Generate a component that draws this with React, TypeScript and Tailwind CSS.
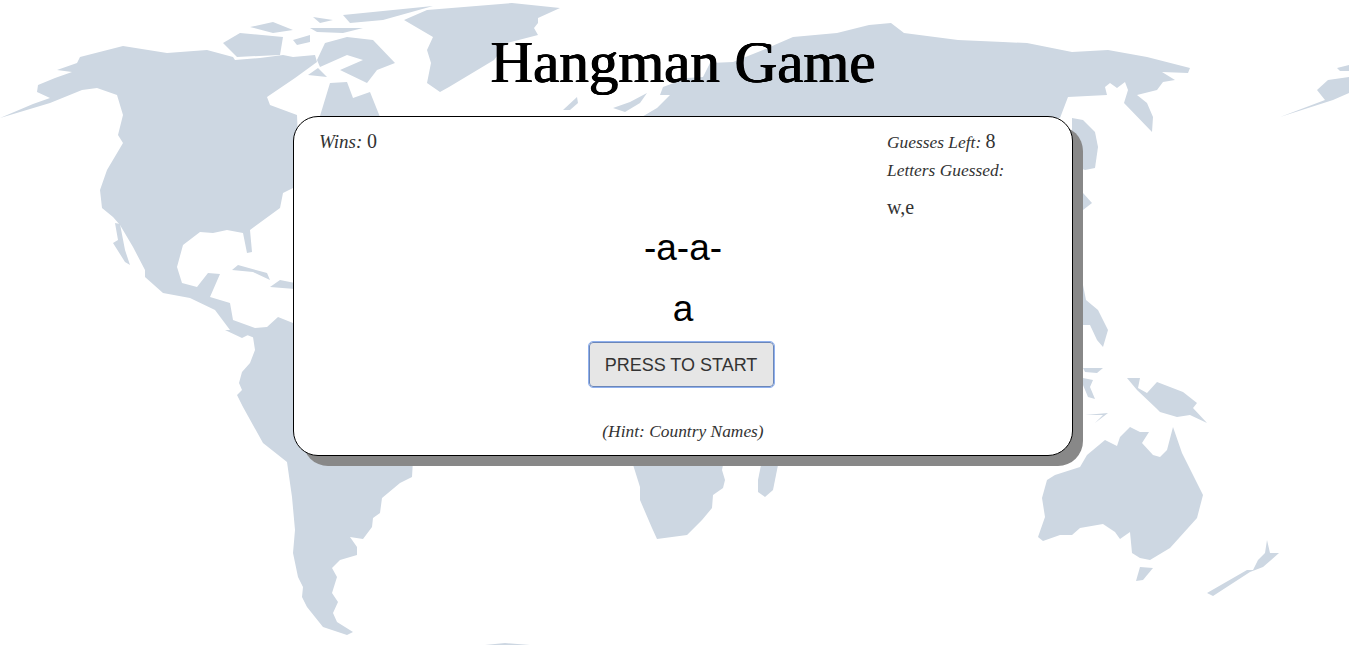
const land = [
  // North America
  "M0,118 L33,104 L50,98 L37,92 L38,85 L55,78 L72,72 L57,70 L77,63 L80,57 L123,46 L167,53 L207,50 L233,57 L235,60 L260,58 L283,55 L293,57 L315,55 L317,62 L295,78 L267,97 L270,105 L297,115 L300,190 L293,188 L283,193 L280,208 L250,230 L252,252 L247,253 L243,233 L227,230 L213,233 L200,232 L183,245 L177,267 L182,283 L197,287 L208,273 L220,274 L210,297 L230,303 L233,320 L255,328 L267,327 L278,317 L293,323 L300,345 L260,340 L242,333 L230,330 L215,310 L190,298 L163,293 L145,277 L145,270 L133,247 L120,225 L113,217 L102,208 L100,190 L107,170 L123,143 L118,135 L123,115 L117,95 L97,88 L82,90 L50,103 L20,112 Z",
  "M115,223 L120,224 L125,250 L130,265 L125,262 L113,243 L118,240 Z",
  // Arctic islands
  "M223,43 L240,33 L283,37 L280,55 L237,57 Z",
  "M250,27 L273,22 L293,30 L273,33 Z",
  "M293,40 L310,35 L310,42 L297,45 Z",
  "M310,28 L363,28 L343,33 L317,32 Z",
  "M313,17 L333,20 L320,23 Z",
  "M325,43 L347,37 L373,40 L395,63 L377,70 L367,83 L340,70 L363,60 L347,55 L320,67 L317,60 Z",
  "M343,15 L433,6 L383,20 L350,23 Z",
  "M320,116 L330,83 L347,82 L353,98 L370,92 L380,117 Z",
  "M308,75 L318,68 L327,77 Z",
  // Caribbean
  "M232,270 L238,265 L267,273 L270,280 L253,272 Z",
  "M270,287 L280,280 L295,283 L295,289 Z",
  // Greenland
  "M404,20 L427,10 L512,3 L560,8 L538,18 L538,23 L534,28 L538,35 L507,43 L494,60 L449,87 L440,92 L427,83 L431,63 L427,50 L433,37 Z",
  // Eurasia
  "M640,118 L657,108 L670,95 L660,95 L663,87 L687,78 L703,77 L710,63 L733,62 L763,50 L793,37 L837,33 L869,25 L891,23 L904,33 L958,40 L1003,42 L1027,43 L1072,52 L1108,50 L1147,57 L1190,68 L1188,73 L1162,72 L1175,80 L1163,82 L1157,90 L1137,95 L1147,103 L1153,117 L1152,132 L1124,103 L1128,90 L1125,82 L1117,88 L1110,83 L1105,87 L1107,95 L1068,97 L1060,118 Z",
  "M563,110 L577,97 L578,103 L570,110 Z",
  "M613,108 L630,102 L647,93 L640,103 L625,112 Z",
  "M1072,118 L1083,120 L1095,132 L1098,147 L1095,168 L1085,170 L1072,165 Z",
  "M1075,193 L1083,193 L1092,203 L1083,210 L1075,210 Z",
  // Alaska wrap
  "M1280,117 L1325,100 L1317,90 L1328,80 L1349,77 L1349,93 L1333,100 Z",
  "M1337,68 L1349,65 L1349,71 L1340,71 Z",
  // South America
  "M225,330 L242,338 L252,333 L253,337 L255,350 L250,363 L242,372 L239,383 L242,390 L237,395 L243,407 L263,443 L287,462 L292,497 L295,530 L293,553 L298,577 L303,587 L302,597 L307,607 L323,627 L347,635 L353,632 L337,622 L333,613 L338,602 L332,593 L337,577 L332,568 L340,560 L357,555 L357,547 L350,537 L363,539 L372,527 L373,518 L380,513 L382,498 L400,483 L412,477 L413,460 L380,400 L300,330 Z",
  // Africa, Madagascar
  "M630,455 L640,487 L640,500 L652,528 L657,539 L687,535 L702,520 L712,508 L713,495 L723,488 L725,480 L722,470 L725,455 Z",
  "M763,455 L758,480 L758,492 L765,497 L773,490 L780,455 Z",
  // Antarctic sliver
  "M485,645 L505,643 L530,645 Z",
  // Australia
  "M1047,480 L1042,498 L1045,517 L1038,537 L1043,541 L1060,535 L1072,535 L1080,528 L1103,524 L1115,532 L1120,539 L1130,532 L1132,553 L1140,558 L1150,560 L1170,548 L1197,518 L1203,495 L1192,473 L1182,453 L1173,427 L1167,450 L1160,457 L1153,455 L1142,443 L1149,432 L1140,432 L1130,427 L1120,437 L1117,446 L1105,440 L1087,455 L1080,467 L1055,475 Z",
  "M1140,567 L1153,568 L1143,580 L1136,581 Z",
  // New Zealand
  "M1207,593 L1247,570 L1253,570 L1258,560 L1265,553 L1267,540 L1270,553 L1279,553 L1263,567 L1250,572 L1213,596 Z",
  // New Guinea
  "M1127,378 L1140,378 L1138,388 L1147,393 L1157,382 L1183,392 L1197,403 L1193,408 L1207,423 L1190,415 L1177,417 L1160,412 L1156,408 L1137,390 Z",
  // Indonesia, Philippines
  "M1083,368 L1103,368 L1097,373 L1085,372 Z",
  "M1083,378 L1093,380 L1090,387 L1095,399 L1088,397 L1083,385 Z",
  "M1085,415 L1108,413 L1095,423 L1103,415 Z",
  "M1083,285 L1086,300 L1098,310 L1108,330 L1103,347 L1097,340 L1090,325 L1083,325 Z",
];

function WorldMap() {
  return (
    <svg
      className="absolute inset-0 h-[645px] w-[1349px]"
      viewBox="0 0 1349 645"
      aria-hidden="true"
    >
      {land.map((d, i) => (
        <path key={i} d={d} fill="#cdd7e2" />
      ))}
    </svg>
  );
}

export default function App() {
  return (
    <div className="relative h-[645px] w-full overflow-hidden bg-white">
      <WorldMap />
      <div className="relative flex flex-col items-center pl-[17px]">
        <h1 className="mt-[26px] h-[90px] text-center font-['Liberation_Serif',serif] text-[59px] leading-[72px] text-black [text-shadow:0.6px_0_0_#000,-0.6px_0_0_#000,0_0.4px_0_#000]">
          Hangman Game
        </h1>
        <div className="h-[340px] w-[780px] rounded-[25px] border border-black bg-white text-center shadow-[10px_10px_0_#888]">
          <div className="flex h-[106px] justify-between pr-[68px] pl-[25px] pt-[11px] text-left text-[#333]">
            <p className="font-['Liberation_Serif',serif] text-[19px] leading-[26px] italic">
              Wins: <span className="text-[20px] not-italic">0</span>
            </p>
            <div className="w-[117px]">
              <p className="font-['Liberation_Serif',serif] text-[17.4px] leading-[26px] italic whitespace-nowrap">
                Guesses Left: <span className="text-[20px] not-italic">8</span>
              </p>
              <p className="mt-[2px] font-['Liberation_Serif',serif] text-[17.4px] leading-[26px] italic whitespace-nowrap">
                Letters Guessed:
              </p>
              <p className="mt-[12px] font-['Liberation_Serif',serif] text-[20px] leading-[24px]">
                w,e
              </p>
            </div>
          </div>
          <p className="mt-[5px] font-['Liberation_Sans',sans-serif] text-[37px] leading-[40px] text-black">
            -a-a-
          </p>
          <p className="mt-[21px] font-['Liberation_Sans',sans-serif] text-[37px] leading-[40px] text-black">
            a
          </p>
          <button className="mt-[13px] mr-[4px] h-[45px] w-[185px] rounded-[4px] border border-[#6b86b8] bg-[#e6e6e6] pt-[2px] font-['Liberation_Sans',sans-serif] text-[18px] text-[#333] outline-1 outline-[#8fb0ee]">
            PRESS TO START
          </button>
          <p className="mt-[31px] font-['Liberation_Serif',serif] text-[17.4px] leading-[26px] text-[#333] italic">
            (Hint: Country Names)
          </p>
        </div>
      </div>
    </div>
  );
}
